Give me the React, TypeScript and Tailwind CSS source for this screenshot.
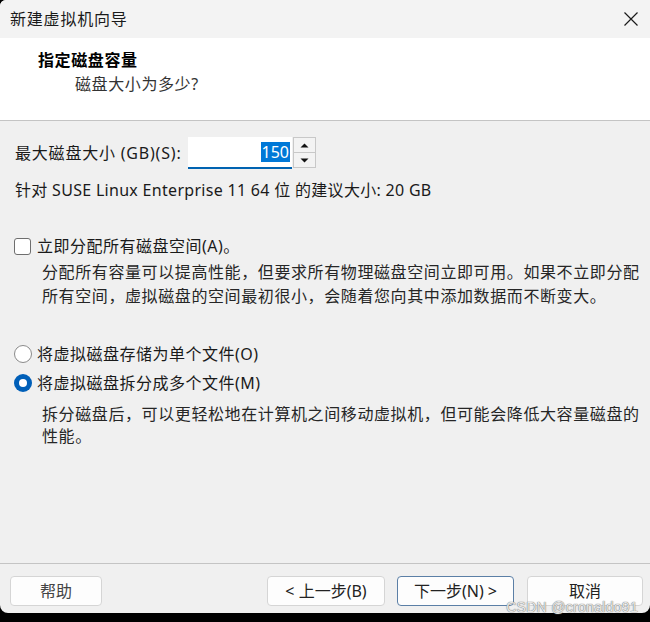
import React, { useState } from 'react';

const font = { fontFamily: '"Noto Sans", "Noto Sans CJK SC", sans-serif' };

const App: React.FC = () => {
    const [split, setSplit] = useState(true);
    const [allocate, setAllocate] = useState(false);

    return (
        <div className="relative w-[650px] h-[622px] bg-black overflow-hidden" style={font}>
            <div className="flex flex-col h-[613px] bg-[#f0f0f0] rounded-b-[8px] rounded-tl-[6px] overflow-hidden text-[#1a1a1a]">
                {/* title bar */}
                <div className="flex items-center justify-between h-[38px] bg-[#f3f3f3] pl-[10px] pr-[10px] flex-none">
                    <span className="text-[16px] tracking-[0.8px] text-[#1a1a1a]">新建虚拟机向导</span>
                    <svg width="16" height="16" viewBox="0 0 16 16" className="mr-[1px]">
                        <path d="M1.5 1.5 L14.5 14.5 M14.5 1.5 L1.5 14.5" stroke="#1a1a1a" strokeWidth="1.2" fill="none" />
                    </svg>
                </div>

                {/* header */}
                <div className="bg-white h-[83px] border-b border-[#c4c4c4] pl-[38px] pt-[10px] flex-none">
                    <div className="text-[16px] leading-[24px] font-bold tracking-[0.6px] text-black">指定磁盘容量</div>
                    <div className="text-[16px] leading-[24px] tracking-[0.6px] pl-[37px] text-[#333]">磁盘大小为多少?</div>
                </div>

                {/* body */}
                <div className="flex-1 pl-[14px]">
                    <div className="flex items-center h-[32px] mt-[16px]">
                        <span className="text-[16px] tracking-[0.8px] pl-[1px] w-[174px] whitespace-nowrap">最大磁盘大小 (GB)(S):</span>
                        <div className="flex items-stretch h-[32px]">
                            <div className="w-[104px] bg-white border-b-2 border-[#0063b1] flex items-center justify-end pr-[2px]">
                                <span className="bg-[#0078d7] text-white text-[16px] leading-[20px] px-[1px]">150</span>
                            </div>
                            <div className="flex flex-col w-[23px] ml-[1px] h-[31px]">
                                <button className="flex-1 flex items-center justify-center bg-[#f3f3f3] border border-[#c8c8c8]">
                                    <svg width="9" height="5" viewBox="0 0 9 5"><path d="M0.5 4.5 L4.5 0.5 L8.5 4.5 Z" fill="#111" /></svg>
                                </button>
                                <button className="flex-1 flex items-center justify-center bg-[#f3f3f3] border border-t-0 border-[#c8c8c8]">
                                    <svg width="9" height="5" viewBox="0 0 9 5"><path d="M0.5 0.5 L4.5 4.5 L8.5 0.5 Z" fill="#111" /></svg>
                                </button>
                            </div>
                        </div>
                    </div>

                    <div className="mt-[10px] pl-[1px] text-[16px] leading-[22px] tracking-[0.3px]">
                        针对 SUSE Linux Enterprise 11 64 位 的建议大小: 20 GB
                    </div>

                    <label className="flex items-center h-[22px] mt-[34px] cursor-pointer" onClick={() => setAllocate(!allocate)}>
                        <span className={`w-[17px] h-[17px] rounded-[3px] border ${allocate ? 'bg-[#005fb8] border-[#005fb8]' : 'bg-white border-[#6e6e6e]'} flex-none`}></span>
                        <span className="ml-[6px] text-[16px] tracking-[0.5px]">立即分配所有磁盘空间(A)。</span>
                    </label>
                    <div className="mt-[3px] pl-[28px] text-[16px] leading-[24px] tracking-[0.6px] text-[#262626] whitespace-nowrap">
                        <div>分配所有容量可以提高性能，但要求所有物理磁盘空间立即可用。如果不立即分配</div>
                        <div>所有空间，虚拟磁盘的空间最初很小，会随着您向其中添加数据而不断变大。</div>
                    </div>

                    <label className="flex items-center h-[22px] mt-[35px] cursor-pointer" onClick={() => setSplit(false)}>
                        <span className={`w-[18px] h-[18px] rounded-full flex-none flex items-center justify-center ${!split ? 'bg-[#005fb8]' : 'bg-white border border-[#8a8a8a]'}`}>
                            {!split && <span className="w-[8px] h-[8px] rounded-full bg-white"></span>}
                        </span>
                        <span className="ml-[5px] text-[16px] tracking-[0.5px]">将虚拟磁盘存储为单个文件(O)</span>
                    </label>
                    <label className="flex items-center h-[22px] mt-[7px] cursor-pointer" onClick={() => setSplit(true)}>
                        <span className={`w-[18px] h-[18px] rounded-full flex-none flex items-center justify-center ${split ? 'bg-[#005fb8]' : 'bg-white border border-[#8a8a8a]'}`}>
                            {split && <span className="w-[8px] h-[8px] rounded-full bg-white"></span>}
                        </span>
                        <span className="ml-[5px] text-[16px] tracking-[0.5px]">将虚拟磁盘拆分成多个文件(M)</span>
                    </label>
                    <div className="mt-[9px] pl-[28px] text-[16px] leading-[22px] tracking-[0.6px] text-[#262626] whitespace-nowrap">
                        <div>拆分磁盘后，可以更轻松地在计算机之间移动虚拟机，但可能会降低大容量磁盘的</div>
                        <div>性能。</div>
                    </div>
                </div>

                {/* footer */}
                <div className="flex-none h-[50px] border-t border-[#c4c4c4] flex items-start pt-[12px] pl-[10px] pr-[7px]">
                    <button className="w-[92px] h-[30px] bg-[#fdfdfd] border border-[#d5d5d5] rounded-[4px] text-[16px] text-[#444]">帮助</button>
                    <div className="flex-1"></div>
                    <button className="w-[118px] h-[30px] bg-[#fdfdfd] border border-[#d5d5d5] rounded-[4px] text-[16px] text-[#222]">&lt; 上一步(B)</button>
                    <button className="ml-[12px] w-[117px] h-[30px] bg-[#fdfdfd] border border-[#5b7fa6] rounded-[4px] text-[16px] text-[#222]">下一步(N) &gt;</button>
                    <button className="ml-[13px] w-[116px] h-[30px] bg-[#fdfdfd] border border-[#d5d5d5] rounded-[4px] text-[16px] text-[#222]">取消</button>
                </div>
            </div>

            {/* watermark */}
            <span className="absolute right-[12px] bottom-[7px] text-[14px] leading-[16px] text-[#e8e8e8] tracking-[0.3px]" style={{ fontFamily: '"Liberation Sans", sans-serif', textShadow: '0 0 1px #777, 0 0 1px #777' }}>
                CSDN @cronaldo91
            </span>
        </div>
    );
};

export default App;
